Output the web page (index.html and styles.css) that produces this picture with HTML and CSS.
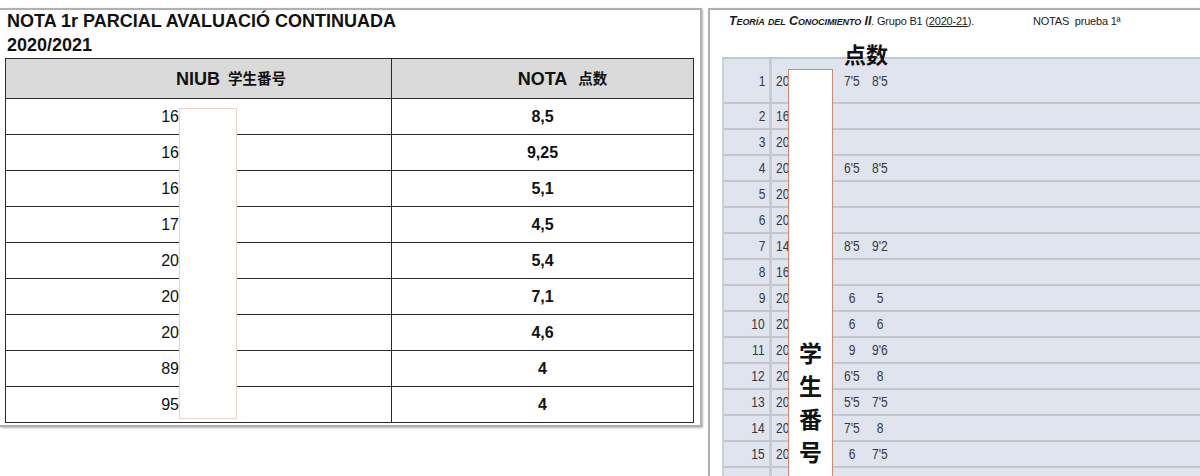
FILE: index.html
```html
<!DOCTYPE html>
<html lang="es">
<head>
<meta charset="utf-8">
<title>Notas</title>
<link rel="stylesheet" href="styles.css">
</head>
<body>
<div class="page">
  <section class="sheet sheet-left">
    <h1 class="title">NOTA 1r PARCIAL AVALUACIÓ CONTINUADA<br>2020/2021</h1>
    <table class="grades">
      <thead>
        <tr>
          <th class="col-id"><span>NIUB</span><span class="cjk">学生番号</span></th>
          <th class="col-nota"><span>NOTA</span><span class="cjk cjk-nota">点数</span></th>
        </tr>
      </thead>
      <tbody>
        <tr><td class="id">16</td><td class="nota">8,5</td></tr>
        <tr><td class="id">16</td><td class="nota">9,25</td></tr>
        <tr><td class="id">16</td><td class="nota">5,1</td></tr>
        <tr><td class="id">17</td><td class="nota">4,5</td></tr>
        <tr><td class="id">20</td><td class="nota">5,4</td></tr>
        <tr><td class="id">20</td><td class="nota">7,1</td></tr>
        <tr><td class="id">20</td><td class="nota">4,6</td></tr>
        <tr><td class="id">89</td><td class="nota">4</td></tr>
        <tr><td class="id">95</td><td class="nota">4</td></tr>
      </tbody>
    </table>
    <div class="mask mask-left"></div>
  </section>

  <section class="sheet sheet-right">
    <div class="doc-head">
      <span class="course"><b class="sc">Teoría del Conocimiento II</b>. Grupo B1 (<u>2020-21</u>).</span>
      <span class="notas">NOTAS&nbsp; prueba 1ª</span>
    </div>
    <div class="big-label">点数</div>
    <div class="list">
      <div class="row first"><div class="num"><span class="t">1</span></div><div class="sid"><span class="t">20</span></div><div class="g"><span class="t">7'5</span></div><div class="g"><span class="t">8'5</span></div></div>
      <div class="row"><div class="num"><span class="t">2</span></div><div class="sid"><span class="t">16</span></div><div class="g"></div><div class="g"></div></div>
      <div class="row"><div class="num"><span class="t">3</span></div><div class="sid"><span class="t">20</span></div><div class="g"></div><div class="g"></div></div>
      <div class="row"><div class="num"><span class="t">4</span></div><div class="sid"><span class="t">20</span></div><div class="g"><span class="t">6'5</span></div><div class="g"><span class="t">8'5</span></div></div>
      <div class="row"><div class="num"><span class="t">5</span></div><div class="sid"><span class="t">20</span></div><div class="g"></div><div class="g"></div></div>
      <div class="row"><div class="num"><span class="t">6</span></div><div class="sid"><span class="t">20</span></div><div class="g"></div><div class="g"></div></div>
      <div class="row"><div class="num"><span class="t">7</span></div><div class="sid"><span class="t">14</span></div><div class="g"><span class="t">8'5</span></div><div class="g"><span class="t">9'2</span></div></div>
      <div class="row"><div class="num"><span class="t">8</span></div><div class="sid"><span class="t">16</span></div><div class="g"></div><div class="g"></div></div>
      <div class="row"><div class="num"><span class="t">9</span></div><div class="sid"><span class="t">20</span></div><div class="g"><span class="t">6</span></div><div class="g"><span class="t">5</span></div></div>
      <div class="row"><div class="num"><span class="t">10</span></div><div class="sid"><span class="t">20</span></div><div class="g"><span class="t">6</span></div><div class="g"><span class="t">6</span></div></div>
      <div class="row"><div class="num"><span class="t">11</span></div><div class="sid"><span class="t">20</span></div><div class="g"><span class="t">9</span></div><div class="g"><span class="t">9'6</span></div></div>
      <div class="row"><div class="num"><span class="t">12</span></div><div class="sid"><span class="t">20</span></div><div class="g"><span class="t">6'5</span></div><div class="g"><span class="t">8</span></div></div>
      <div class="row"><div class="num"><span class="t">13</span></div><div class="sid"><span class="t">20</span></div><div class="g"><span class="t">5'5</span></div><div class="g"><span class="t">7'5</span></div></div>
      <div class="row"><div class="num"><span class="t">14</span></div><div class="sid"><span class="t">20</span></div><div class="g"><span class="t">7'5</span></div><div class="g"><span class="t">8</span></div></div>
      <div class="row"><div class="num"><span class="t">15</span></div><div class="sid"><span class="t">20</span></div><div class="g"><span class="t">6</span></div><div class="g"><span class="t">7'5</span></div></div>
      <div class="row"><div class="num"></div><div class="sid"></div><div class="g"></div><div class="g"></div></div>
    </div>
    <div class="mask mask-right"><span>学</span><span>生</span><span>番</span><span>号</span></div>
  </section>
</div>
</body>
</html>
```

FILE: styles.css
```css
html, body {
  margin: 0;
  padding: 0;
  background: #fff;
}

body {
  font-family: "Liberation Sans", Arial, sans-serif;
  color: #111;
}

.page {
  display: flex;
  align-items: flex-start;
  padding-top: 8px;
  height: 476px;
  box-sizing: border-box;
  overflow: hidden;
}

.sheet {
  position: relative;
  background: #fff;
  border: 2px solid #b0b0b0;
  box-shadow: 1px 1px 2px rgba(0, 0, 0, 0.28);
}

/* ---------- left sheet ---------- */
.sheet-left {
  width: 700px;
  height: 415px;
  border-left: none;
  flex: none;
}

.title {
  margin: -1px 0 0 0;
  padding: 0 7px;
  font-size: 18px;
  line-height: 24px;
  font-weight: bold;
  color: #111;
}

.grades {
  margin: 1px 0 0 5px;
  width: 689px;
  border-collapse: collapse;
  table-layout: fixed;
  border: 1px solid #222;
}

.grades th,
.grades td {
  border: 1px solid #2a2a2a;
  padding: 0;
}

.grades th {
  height: 39px;
  background: #dadada;
  font-size: 18px;
  font-weight: bold;
  text-align: center;
  color: #111;
}

.grades .col-id {
  width: 386px;
  padding-left: 65px;
  box-sizing: border-box;
}

.grades .col-nota {
  padding-left: 40px;
}

.cjk {
  font-family: "Noto Sans CJK SC", "Noto Sans CJK JP", sans-serif;
  font-size: 14.5px;
  font-weight: bold;
  margin-left: 8px;
  vertical-align: 1px;
}

.cjk-nota {
  margin-left: 11px;
}

.grades td {
  height: 35px;
  font-size: 16px;
}

.grades .id {
  text-align: right;
  padding-right: 212px;
}

.grades .nota {
  text-align: center;
  font-weight: bold;
}

.mask {
  position: absolute;
  background: #fff;
  box-sizing: border-box;
}

.mask-left {
  left: 179px;
  top: 98px;
  width: 58px;
  height: 311px;
  border: 1px solid #e9d3cb;
}

/* ---------- right sheet ---------- */
.sheet-right {
  margin-left: 6px;
  flex: 1;
  height: 480px;
  border-right: none;
  border-bottom: none;
}

.doc-head {
  display: flex;
  padding: 4px 0 0 19px;
  font-size: 11px;
  line-height: 14px;
  color: #1a1a1a;
  letter-spacing: -0.2px;
}

.course {
  width: 304px;
  white-space: nowrap;
}

.sc {
  font-style: italic;
  font-variant: small-caps;
  font-size: 12.5px;
  letter-spacing: -0.1px;
}

.big-label {
  position: absolute;
  left: 134px;
  top: 32px;
  font-family: "Noto Sans CJK SC", "Noto Sans CJK JP", sans-serif;
  font-size: 22px;
  line-height: 22px;
  font-weight: bold;
  color: #111;
}

.list {
  margin: 29px 0 0 12px;
  border-top: 2px solid #c3c7cc;
  border-left: 2px solid #cdd1d6;
  background: #dfe4ee;
  font-size: 15px;
  color: #383838;
}

.row {
  display: flex;
  height: 24px;
  line-height: 24px;
  border-bottom: 2px solid #c3c7cc;
}

.row.first {
  height: 43px;
  line-height: 43px;
}

.num {
  flex: none;
  width: 41px;
  padding-right: 4px;
  text-align: right;
  border-right: 3px solid #c9cdd2;
}

.sid {
  flex: none;
  width: 62px;
  padding-left: 4px;
}

.g {
  flex: none;
  width: 28px;
  text-align: center;
}

.t {
  display: inline-block;
  transform: scaleX(0.8);
}

.num .t {
  transform-origin: 100% 50%;
}

.sid .t {
  transform-origin: 0 50%;
}

.mask-right {
  left: 78px;
  top: 59px;
  width: 45px;
  height: 440px;
  border: 1px solid #d9866e;
  display: flex;
  flex-direction: column;
  align-items: center;
  padding-top: 266px;
  font-family: "Noto Sans CJK SC", "Noto Sans CJK JP", sans-serif;
  font-size: 23px;
  line-height: 33px;
  font-weight: bold;
  color: #111;
}
```
